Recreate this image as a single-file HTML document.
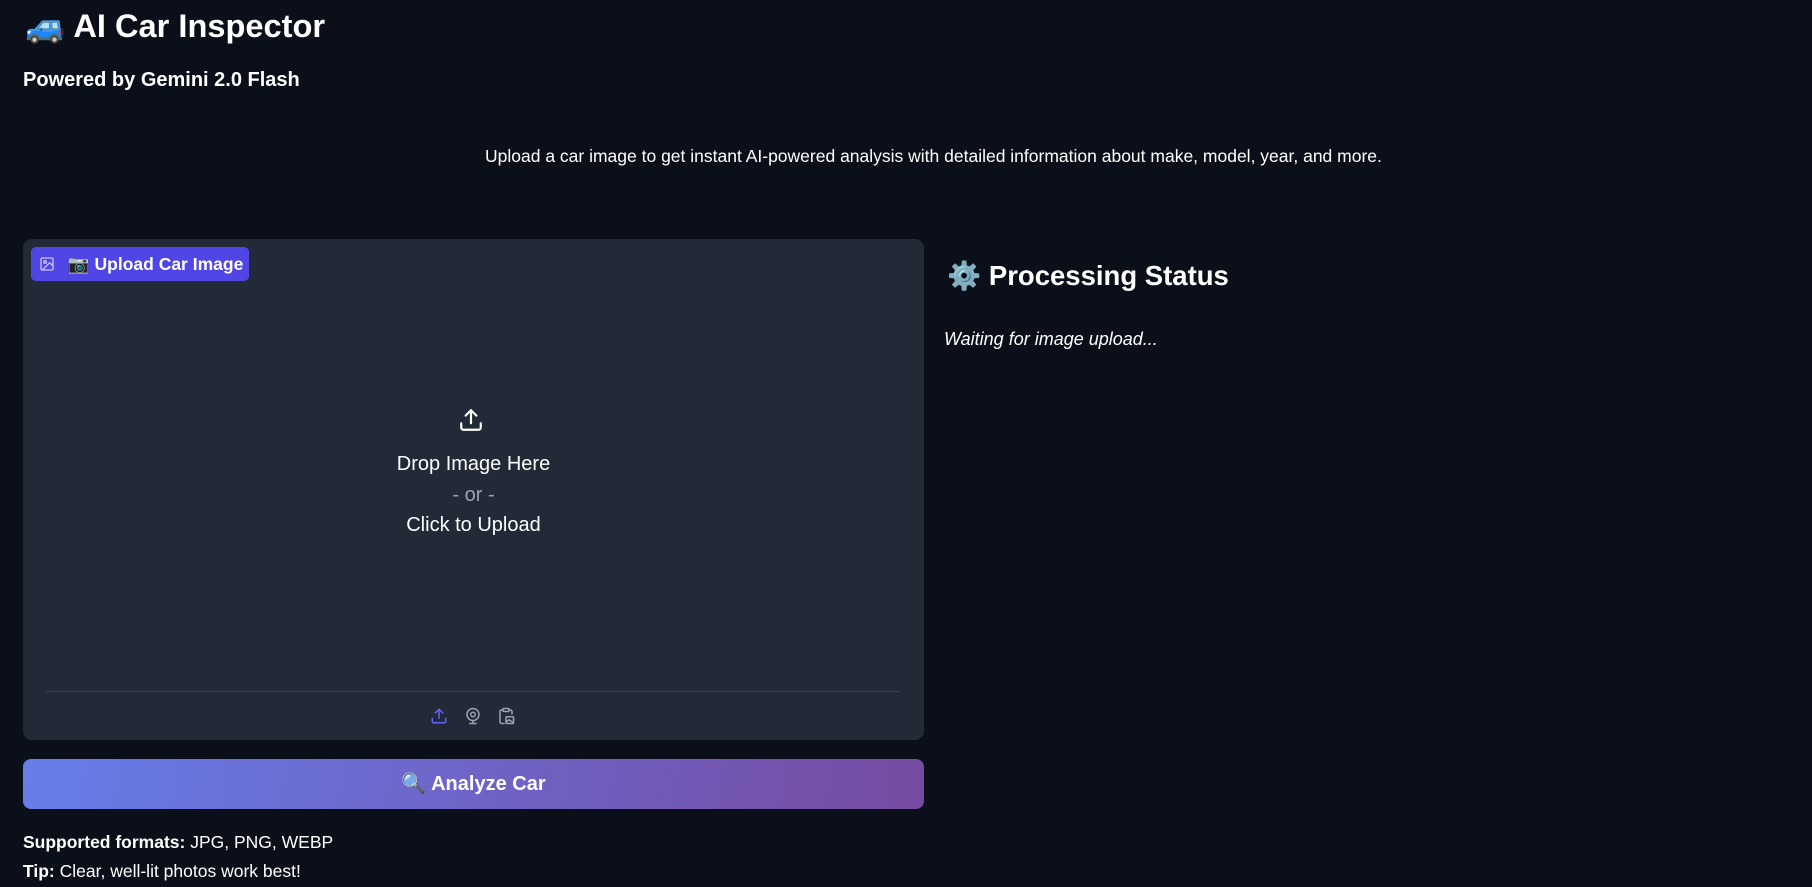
<!DOCTYPE html>
<html><head><meta charset="utf-8"><style>
*{margin:0;padding:0;box-sizing:border-box}
body{width:1812px;height:887px;background:#0b0f19;color:#fff;font-family:"Liberation Sans",sans-serif;position:relative;overflow:hidden}
.a{position:absolute;white-space:nowrap}
</style></head><body>
<div class="a" style="left:25px;top:6px;font-size:32.6px;font-weight:bold;line-height:40px">🚙 AI Car Inspector</div>
<div class="a" style="left:23px;top:68px;font-size:20px;font-weight:bold;line-height:24px">Powered by Gemini 2.0 Flash</div>
<div class="a" style="left:485px;top:145px;font-size:17.5px;line-height:22px">Upload a car image to get instant AI-powered analysis with detailed information about make, model, year, and more.</div>

<div class="a" style="left:23px;top:239px;width:901px;height:501px;background:#222a38;border-radius:9px"></div>
<div class="a" style="left:31px;top:247px;width:218px;height:34px;background:#4f46e5;border-radius:5px;font-size:17.5px;font-weight:bold;line-height:34px;padding-left:8px">
<svg width="16" height="16" viewBox="0 0 24 24" fill="none" stroke="#c7c4f7" stroke-width="2" style="vertical-align:-2px"><rect x="3" y="3" width="18" height="18" rx="2"/><circle cx="9" cy="9" r="2"/><path d="M21 15l-5-5L5 21"/></svg>
<span style="margin-left:8px">📷 Upload Car Image</span></div>

<svg class="a" style="left:458px;top:407px" width="26" height="26" viewBox="0 0 24 24" fill="none" stroke="#fff" stroke-width="2" stroke-linecap="round" stroke-linejoin="round"><path d="M21 15v4a2 2 0 0 1-2 2H5a2 2 0 0 1-2-2v-4"/><path d="M17 8l-5-5-5 5"/><path d="M12 3v12"/></svg>
<div class="a" style="left:23px;width:901px;text-align:center;top:452px;font-size:20px;line-height:24px">Drop Image Here</div>
<div class="a" style="left:23px;width:901px;text-align:center;top:483px;font-size:20px;line-height:24px;color:#9ca3af">- or -</div>
<div class="a" style="left:23px;width:901px;text-align:center;top:513px;font-size:20px;line-height:24px">Click to Upload</div>
<div class="a" style="left:46px;top:691px;width:854px;height:1px;background:#374151"></div>
<svg class="a" style="left:430px;top:707px" width="18" height="18" viewBox="0 0 24 24" fill="none" stroke="#6366f1" stroke-width="2" stroke-linecap="round"><path d="M21 15v4a2 2 0 0 1-2 2H5a2 2 0 0 1-2-2v-4"/><path d="M17 8l-5-5-5 5"/><path d="M12 3v12"/></svg>
<svg class="a" style="left:464px;top:707px" width="18" height="18" viewBox="0 0 24 24" fill="none" stroke="#9ca3af" stroke-width="2"><circle cx="12" cy="10" r="8"/><circle cx="12" cy="10" r="3"/><path d="M7 22h10M12 18v4"/></svg>
<svg class="a" style="left:497px;top:707px" width="18" height="18" viewBox="0 0 24 24" fill="none" stroke="#9ca3af" stroke-width="2"><rect x="8" y="2" width="8" height="4" rx="1"/><path d="M16 4h2a2 2 0 0 1 2 2v4M8 4H6a2 2 0 0 0-2 2v14a2 2 0 0 0 2 2h4"/><rect x="12" y="13" width="10" height="9" rx="1"/><path d="M12 20l4-3 6 4"/></svg>

<div class="a" style="left:23px;top:759px;width:901px;height:50px;border-radius:8px;background:linear-gradient(100deg,#667eea,#764ba2);text-align:center;font-size:20px;font-weight:bold;line-height:50px">🔍 Analyze Car</div>
<div class="a" style="left:23px;top:831px;font-size:17.5px;line-height:22px"><b>Supported formats:</b> JPG, PNG, WEBP</div>
<div class="a" style="left:23px;top:860px;font-size:17.5px;line-height:22px"><b>Tip:</b> Clear, well-lit photos work best!</div>

<div class="a" style="left:947px;top:259px;font-size:27.5px;font-weight:bold;line-height:34px">⚙️ Processing Status</div>
<div class="a" style="left:944px;top:328px;font-size:18px;font-style:italic;line-height:22px">Waiting for image upload...</div>
</body></html>
